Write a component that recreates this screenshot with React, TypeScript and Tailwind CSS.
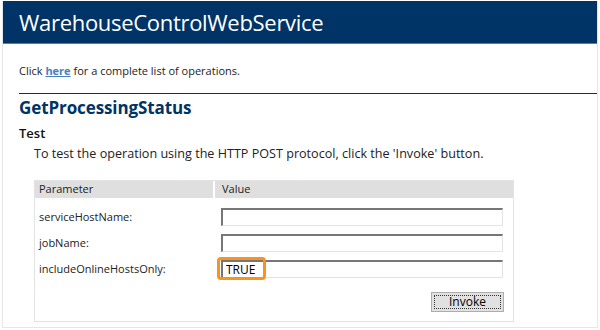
const params = [
  { name: "serviceHostName:", value: "" },
  { name: "jobName:", value: "" },
  { name: "includeOnlineHostsOnly:", value: "TRUE", highlight: true },
];

function ParamInput({ value, highlight }: { value: string; highlight?: boolean }) {
  return (
    <div className="relative h-[18px] w-[282px]">
      <input
        type="text"
        readOnly
        value={value}
        className="h-full w-full border-t-2 border-l-2 border-r border-b border-t-[#767676] border-l-[#767676] border-r-[#e3e3e3] border-b-[#e3e3e3] bg-white px-[3px] text-[12px] leading-none text-black outline-none"
      />
      {highlight && (
        <div className="absolute left-[-4px] top-[-3px] h-[23px] w-[49px] rounded-[4px] border-[3px] border-[#f7931e]" />
      )}
    </div>
  );
}

export default function App() {
  return (
    <div
      className="h-[330px] w-[600px] overflow-hidden bg-white"
      style={{ fontFamily: '"Open Sans", "Noto Sans", sans-serif' }}
    >
      <div className="ml-[2px] mt-[1px] h-[327px] w-[596px] border-x border-b border-[#e6e6e6]">
        <div className="flex h-[43px] items-center border-b border-[#5a7ca3] bg-[#003366] pl-[16px]">
          <h1 className="text-[22px] leading-none tracking-[-0.3px] text-white">WarehouseControlWebService</h1>
        </div>

        <div className="pl-[16px]">
          <p className="mt-[20px] text-[11px] leading-[14px] text-[#222]">
            Click{" "}
            <a href="#" className="font-bold text-[#4a7fc1] underline">
              here
            </a>{" "}
            for a complete list of operations.
          </p>

          <div className="mt-[15px] border-t border-[#003366]" />

          <h2 className="mt-[3px] text-[17px] font-bold leading-[22px] tracking-[-0.1px] text-[#003366]">
            GetProcessingStatus
          </h2>

          <h3 className="mt-[6px] text-[13px] font-semibold leading-[16px] text-[#111]">Test</h3>

          <div className="pl-[15px]">
            <p className="mt-[6px] text-[12.6px] leading-[14px] text-[#222]">
              To test the operation using the HTTP POST protocol, click the 'Invoke' button.
            </p>

            <div className="mt-[19px] h-[142px] w-[480px] border border-[#e3e3e3] text-[11px] text-[#222]">
              <div className="flex h-[17px] items-center bg-[#dfdfdf]">
                <div className="w-[178px] pl-[4px]">Parameter</div>
                <div className="h-full w-[2px] bg-white" />
                <div className="pl-[7px]">Value</div>
              </div>

              <div className="flex flex-col gap-[8px] pt-[10px]">
                {params.map((p) => (
                  <div key={p.name} className="flex items-center">
                    <div className="w-[186px] pl-[4px]">{p.name}</div>
                    <ParamInput value={p.value} highlight={p.highlight} />
                  </div>
                ))}
              </div>

              <div className="mt-[14px] flex w-[469px] justify-end">
                <button
                  type="button"
                  className="h-[20px] w-[73px] border border-[#adadad] bg-[#e1e1e1] p-[2px] text-[12px] leading-none text-black"
                >
                  <span className="flex h-full w-full items-center justify-center border border-dotted border-[#333]">
                    Invoke
                  </span>
                </button>
              </div>
            </div>
          </div>
        </div>
      </div>
    </div>
  );
}
